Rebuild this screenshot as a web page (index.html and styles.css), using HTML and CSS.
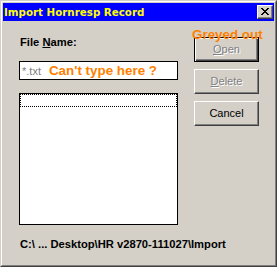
FILE: index.html
```html
<!DOCTYPE html>
<html>
<head>
<meta charset="utf-8">
<link rel="stylesheet" href="styles.css">
</head>
<body>
<div class="window">
  <div class="frame">
    <div class="titlebar">
      <span class="title">Import Hornresp Record</span>
      <span class="close"><svg width="8" height="7" viewBox="0 0 8 7"><path d="M0 0h2v1H0zM6 0h2v1H6zM1 1h2v1H1zM5 1h2v1H5zM2 2h4v1H2zM3 3h2v1H3zM2 4h4v1H2zM1 5h2v1H1zM5 5h2v1H5zM0 6h2v1H0zM6 6h2v1H6z" fill="#000"/></svg></span>
    </div>
    <div class="content">
      <div class="main">
        <div class="left">
          <div class="label">File <u>N</u>ame:</div>
          <div class="field"><span class="ph">*.txt</span><span class="note inline">Can't type here ?</span></div>
          <div class="list"><div class="focus"></div></div>
        </div>
        <div class="buttons">
          <div class="btn default disabled"><span><u>O</u>pen</span></div>
          <div class="btn disabled"><span><u>D</u>elete</span></div>
          <div class="btn"><span>Cancel</span></div>
        </div>
      </div>
      <div class="path">C:\ ... Desktop\HR v2870-111027\Import</div>
    </div>
  </div>
  <div class="note greyed">Greyed out</div>
</div>
</body>
</html>
```

FILE: styles.css
```css
html, body {
  margin: 0;
  padding: 0;
  background: #d4d0c8;
}
body {
  width: 277px;
  height: 267px;
  overflow: hidden;
  font-family: "Liberation Sans", Arial, sans-serif;
  font-size: 11px;
  color: #000;
}
.window {
  position: relative;
  box-sizing: border-box;
  width: 277px;
  height: 267px;
  border-style: solid;
  border-width: 1px;
  border-color: #d4d0c8 #404040 #404040 #d4d0c8;
  background: #d4d0c8;
}
.frame {
  box-sizing: border-box;
  height: 265px;
  border-style: solid;
  border-width: 1px;
  border-color: #fff #808080 #808080 #fff;
  padding: 1px;
}
.titlebar {
  height: 18px;
  background: #0000ff;
  display: flex;
  align-items: center;
  justify-content: space-between;
  padding: 0 1px 0 1px;
}
.title {
  color: #ffff00;
  font-family: "DejaVu Sans", Verdana, sans-serif;
  font-weight: bold;
  font-size: 10.3px;
  line-height: 18px;
  white-space: nowrap;
}
.close {
  box-sizing: border-box;
  width: 16px;
  height: 14px;
  background: #d4d0c8;
  border-style: solid;
  border-width: 1px;
  border-color: #fff #404040 #404040 #fff;
  box-shadow: inset -1px -1px #808080;
  padding: 2px 0 0 3px;
  display: block;
}
.close svg {
  display: block;
}
.content {
  padding: 15px 0 0 16px;
}
.main {
  display: flex;
  gap: 16px;
}
.left {
  width: 159px;
  display: flex;
  flex-direction: column;
}
.label {
  font-weight: bold;
  font-size: 11.2px;
  line-height: 13px;
  padding-left: 1px;
}
.field {
  box-sizing: border-box;
  margin-top: 12px;
  height: 19px;
  background: #fff;
  border: 1px solid #000;
  padding-left: 2px;
  line-height: 17px;
  white-space: nowrap;
  overflow: hidden;
}
.ph {
  color: #808080;
}
.note {
  color: #ff8000;
  font-weight: bold;
  font-size: 13.4px;
}
.note.inline {
  margin-left: 8px;
}
.greyed {
  position: absolute;
  left: 191px;
  top: 26px;
  line-height: 15px;
}
.list {
  box-sizing: border-box;
  margin-top: 13px;
  height: 132px;
  background: #fff;
  border: 1px solid #000;
}
.focus {
  box-sizing: border-box;
  height: 13px;
  border: 1px dotted #000;
}
.buttons {
  margin-top: 1px;
  display: flex;
  flex-direction: column;
  gap: 7px;
}
.btn {
  box-sizing: border-box;
  width: 65px;
  height: 25px;
  border-style: solid;
  border-width: 1px;
  border-color: #fff #404040 #404040 #fff;
  box-shadow: inset -1px -1px #808080;
  display: flex;
  align-items: center;
  justify-content: center;
  line-height: 13px;
}
.btn.default {
  border: 1px solid #000;
  box-shadow: inset 1px 1px #fff, inset -1px -1px #404040, inset -2px -2px #808080;
}
.btn.disabled {
  color: #808080;
  text-shadow: 1px 1px #fff;
}
.path {
  margin-top: 13px;
  padding-left: 1px;
  font-weight: bold;
  font-size: 11.2px;
  line-height: 13px;
  white-space: nowrap;
}
```
